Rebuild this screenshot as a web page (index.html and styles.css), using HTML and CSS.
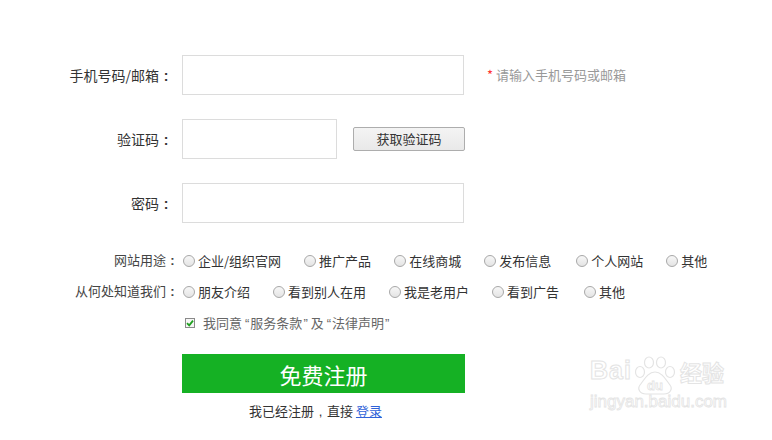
FILE: index.html
```html
<!DOCTYPE html>
<html lang="zh-CN">
<head>
<meta charset="utf-8">
<title>注册</title>
<link rel="stylesheet" href="styles.css">
</head>
<body>
<div class="form">
  <div class="field">
    <label class="lbl">手机号码/邮箱<span class="punct">:</span></label>
    <input class="inp inp-wide" type="text">
    <span class="hint"><span class="star">*</span> 请输入手机号码或邮箱</span>
  </div>
  <div class="field">
    <label class="lbl">验证码<span class="punct">:</span></label>
    <input class="inp inp-short" type="text">
    <button class="code-btn" type="button">获取验证码</button>
  </div>
  <div class="field">
    <label class="lbl">密码<span class="punct">:</span></label>
    <input class="inp inp-wide" type="password">
  </div>

  <div class="choice first">
    <span class="clbl">网站用途<span class="punct">:</span></span>
    <label class="opt"><span class="radio"></span>企业/组织官网</label>
    <label class="opt"><span class="radio"></span>推广产品</label>
    <label class="opt"><span class="radio"></span>在线商城</label>
    <label class="opt"><span class="radio"></span>发布信息</label>
    <label class="opt"><span class="radio"></span>个人网站</label>
    <label class="opt"><span class="radio"></span>其他</label>
  </div>
  <div class="choice">
    <span class="clbl">从何处知道我们<span class="punct">:</span></span>
    <label class="opt"><span class="radio"></span>朋友介绍</label>
    <label class="opt"><span class="radio"></span>看到别人在用</label>
    <label class="opt"><span class="radio"></span>我是老用户</label>
    <label class="opt"><span class="radio"></span>看到广告</label>
    <label class="opt"><span class="radio"></span>其他</label>
  </div>
  <div class="agree">
    <span class="check"><svg width="8" height="8" viewBox="0 0 8 8"><path d="M1 4.2 L3.2 6.3 L7 1.6" fill="none" stroke="#1fa01f" stroke-width="1.8"/></svg></span>
    <span class="agree-text">我同意<span class="q q-open">“</span>服务条款<span class="q q-close">”</span>及<span class="q q-open">“</span>法律声明<span class="q q-close">”</span></span>
  </div>
  <button class="submit" type="button">免费注册</button>
  <div class="login">我已经注册<span class="punct">,</span>直接 <a href="#" class="login-link">登录</a></div>
</div>

<div class="watermark">
  <div class="wm-top">
    <span class="wm-bai">Bai</span>
    <svg class="wm-paw" width="46" height="40" viewBox="0 0 46 40">
      <g fill="none" stroke="#e4e4e4" stroke-width="1.2">
        <ellipse cx="8" cy="16" rx="4.5" ry="5.5"/>
        <ellipse cx="17" cy="6.5" rx="4.5" ry="5.5"/>
        <ellipse cx="29" cy="6.5" rx="4.5" ry="5.5"/>
        <ellipse cx="38" cy="16" rx="4.5" ry="5.5"/>
        <path d="M23 16 C16 16 12 24 8 29 C5 33 8 38 14 38 L32 38 C38 38 41 33 38 29 C34 24 30 16 23 16 Z"/>
      </g>
      <text x="23" y="34" text-anchor="middle" font-family="Liberation Sans, sans-serif" font-size="13" font-weight="bold" fill="#ffffff" stroke="#e4e4e4" stroke-width="0.8">du</text>
    </svg>
    <span class="wm-jy">经验</span>
  </div>
  <div class="wm-url">jingyan.baidu.com</div>
</div>
</body>
</html>
```

FILE: styles.css
```css
* { box-sizing: border-box; }

body {
  margin: 0;
  background: #fff;
  font-family: "Microsoft YaHei", "Noto Sans CJK SC", sans-serif;
  color: #333;
}

.form {
  padding-top: 55px;
  width: 772px;
}

.punct {
  display: inline-block;
  width: 1em;
  text-align: center;
  font-family: "Liberation Sans", sans-serif;
  font-weight: bold;
}

.field {
  display: flex;
  align-items: center;
  height: 40px;
  margin-bottom: 24px;
}

.lbl {
  width: 173px;
  margin-right: 9px;
  text-align: right;
  font-size: 14px;
  line-height: 20px;
  color: #333;
}

.inp {
  height: 40px;
  border: 1px solid #dcdcdc;
  background: #fff;
  outline: none;
  padding: 0 8px;
  font-size: 14px;
}

.inp-wide { width: 282px; }
.inp-short { width: 155px; }

.hint {
  margin-left: 23px;
  font-size: 13px;
  line-height: 20px;
  color: #999;
}

.star { color: #f33; }

.code-btn {
  margin-left: 16px;
  width: 112px;
  height: 24px;
  padding: 0;
  border: 1px solid #adadad;
  border-radius: 2px;
  background: linear-gradient(#f4f4f4, #e9e9e9);
  font-family: inherit;
  font-size: 13px;
  line-height: 20px;
  color: #333;
}

.choice {
  display: flex;
  align-items: center;
  height: 31px;
  font-size: 13px;
  line-height: 20px;
}

.choice.first { margin-top: -2px; }

.clbl {
  width: 179px;
  text-align: right;
  color: #444;
}

.opt {
  display: flex;
  align-items: center;
  margin-right: 23px;
  color: #333;
  white-space: nowrap;
}

.radio {
  width: 12px;
  height: 12px;
  margin-left: 4px;
  margin-right: 3px;
  border: 1px solid #a8a8a8;
  border-radius: 50%;
  background: linear-gradient(#f7f7f7, #e4e4e4);
}

.opt + .opt .radio { margin-left: 0; }

.opt:nth-child(6) { margin-left: 2px; }

.agree {
  display: flex;
  align-items: center;
  height: 32px;
  padding-left: 185px;
  font-size: 13px;
  line-height: 20px;
}

.check {
  width: 10px;
  height: 10px;
  border: 1px solid #8a8a8a;
  background: #f6f6f6;
  display: flex;
  align-items: center;
  justify-content: center;
  margin-right: 8px;
}

.check svg { display: block; }

.agree-text { color: #666; }

.q {
  font-family: "Liberation Sans", sans-serif;
}

.q-open { margin: 0 1px 0 3px; }
.q-close { margin: 0 3px 0 1px; }

.submit {
  display: block;
  margin: 15px 0 0 182px;
  width: 283px;
  height: 39px;
  border: none;
  padding: 0;
  background: #15b124;
  color: #fff;
  font-family: inherit;
  font-size: 22px;
  line-height: 30px;
}

.login {
  margin: 8px 0 0 249px;
  font-size: 13px;
  line-height: 20px;
  color: #333;
}

.login .punct { font-weight: normal; }

.login-link {
  color: #2f62d8;
  text-decoration: underline;
}

.watermark {
  position: absolute;
  left: 590px;
  top: 356px;
  color: transparent;
}

.wm-top {
  display: flex;
  align-items: flex-end;
}

.wm-bai {
  font-family: "Liberation Sans", sans-serif;
  font-weight: bold;
  font-size: 25px;
  line-height: 24px;
  color: #fff;
  -webkit-text-stroke: 1px #e4e4e4;
  letter-spacing: 1px;
  margin-bottom: 14px;
}

.wm-paw { display: block; }

.wm-jy {
  font-family: "Noto Sans CJK SC", sans-serif;
  font-weight: bold;
  font-size: 22px;
  line-height: 22px;
  color: #fff;
  -webkit-text-stroke: 1px #e4e4e4;
  margin-bottom: 14px;
  margin-left: 2px;
}

.wm-url {
  font-family: "Liberation Sans", sans-serif;
  font-size: 17px;
  line-height: 18px;
  color: #fff;
  -webkit-text-stroke: 0.8px #e4e4e4;
  margin-top: -3px;
}
```
